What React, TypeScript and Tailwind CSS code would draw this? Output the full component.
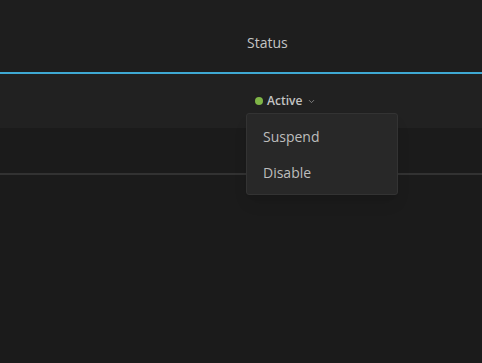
import { ChevronDown } from "lucide-react";

const menuItems = ["Suspend", "Disable"];

function StatusMenu() {
  return (
    <div className="absolute left-[-9px] top-[21px] w-[152px] rounded-[3px] border border-[#333333] bg-[#282828] py-[4px] shadow-lg">
      {menuItems.map((item) => (
        <div
          key={item}
          className="flex h-[36px] items-center px-[16px] text-[14px] text-[#bdbdbd]"
        >
          {item}
        </div>
      ))}
    </div>
  );
}

export default function App() {
  return (
    <div
      className="h-[363px] w-[482px] overflow-hidden bg-[#1b1b1b]"
      style={{ fontFamily: '"Open Sans", sans-serif' }}
    >
      <div className="h-[72px] bg-[#1e1e1e] pl-[247px] pt-[33px] text-[14px] leading-[20px] text-[#c4c4c4]">
        Status
      </div>
      <div className="h-[2px] bg-[#3fa9d3]" />
      <div className="flex h-[54px] items-center bg-[#212121] pl-[255px]">
        <div className="relative flex items-center">
          <span className="h-[8px] w-[8px] rounded-full bg-[#7fb547]" />
          <span className="ml-[4px] text-[12px] font-semibold text-[#c4c4c4]">
            Active
          </span>
          <ChevronDown className="ml-[5px] h-[9px] w-[9px] text-[#9a9a9a]" strokeWidth={2} />
          <StatusMenu />
        </div>
      </div>
      <div className="h-[47px] border-b-2 border-[#323232]" />
    </div>
  );
}
